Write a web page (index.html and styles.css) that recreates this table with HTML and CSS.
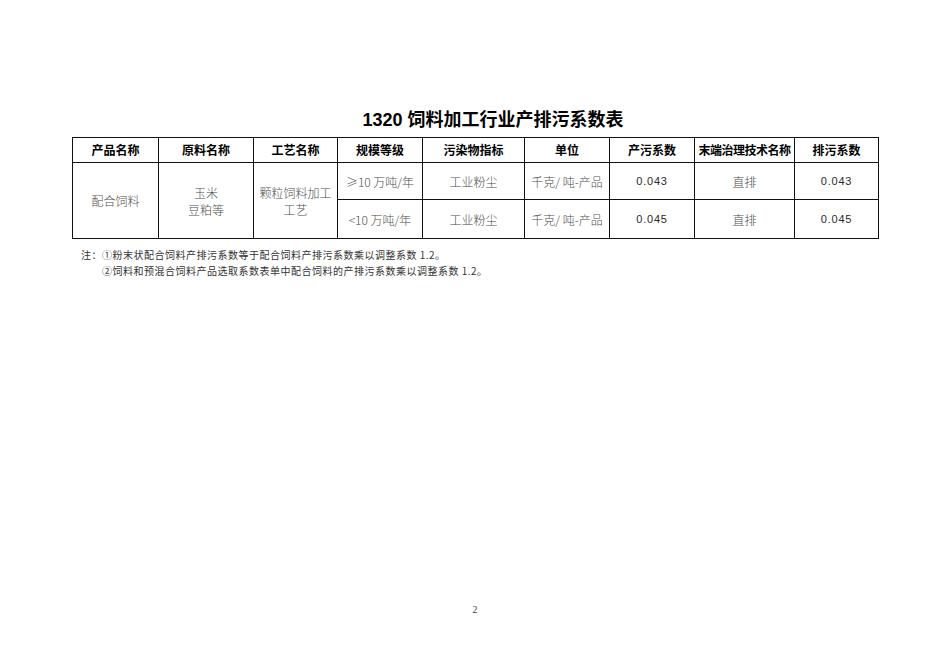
FILE: index.html
```html
<!DOCTYPE html>
<html lang="zh-CN">
<head>
<meta charset="utf-8">
<link rel="stylesheet" href="styles.css">
</head>
<body>
<div class="page">
  <h1 class="title">1320 饲料加工行业产排污系数表</h1>
  <table class="coef">
    <colgroup>
      <col class="c1"><col class="c2"><col class="c3"><col class="c4"><col class="c5"><col class="c6"><col class="c7"><col class="c8"><col class="c9">
    </colgroup>
    <thead>
      <tr class="head">
        <th>产品名称</th><th>原料名称</th><th>工艺名称</th><th>规模等级</th><th>污染物指标</th><th>单位</th><th>产污系数</th><th class="tight">末端治理技术名称</th><th>排污系数</th>
      </tr>
    </thead>
    <tbody>
      <tr class="r1">
        <td rowspan="2">配合饲料</td>
        <td rowspan="2">玉米<br>豆粕等</td>
        <td rowspan="2">颗粒饲料加工<br>工艺</td>
        <td>≥10 万吨/年</td>
        <td>工业粉尘</td>
        <td>千克/ 吨-产品</td>
        <td class="num">0.043</td>
        <td>直排</td>
        <td class="num">0.043</td>
      </tr>
      <tr class="r2">
        <td>&lt;10 万吨/年</td>
        <td>工业粉尘</td>
        <td>千克/ 吨-产品</td>
        <td class="num">0.045</td>
        <td>直排</td>
        <td class="num">0.045</td>
      </tr>
    </tbody>
  </table>
  <div class="notes">
    <p class="n1">注：①粉末状配合饲料产排污系数等于配合饲料产排污系数乘以调整系数 1.2。</p>
    <p class="n2">②饲料和预混合饲料产品选取系数表单中配合饲料的产排污系数乘以调整系数 1.2。</p>
  </div>
  <div class="pageno">2</div>
</div>
</body>
</html>
```
FILE: styles.css
```css
html, body {
  margin: 0;
  padding: 0;
  background: #fff;
}
.page {
  width: 950px;
  height: 672px;
  position: relative;
  font-family: "Noto Sans CJK SC", "Liberation Sans", sans-serif;
  color: #000;
}
.title {
  margin: 0;
  padding-top: 108px;
  padding-left: 36px;
  height: 24px;
  line-height: 24px;
  text-align: center;
  font-family: "Liberation Sans", "Noto Sans CJK SC", sans-serif;
  font-size: 18px;
  font-weight: bold;
}
.coef {
  margin-top: 5px;
  margin-left: 72px;
  width: 806px;
  border-collapse: collapse;
  table-layout: fixed;
}
.c1 { width: 86px; }
.c2 { width: 95px; }
.c3 { width: 84px; }
.c4 { width: 85px; }
.c5 { width: 102px; }
.c6 { width: 85px; }
.c7 { width: 85px; }
.c8 { width: 100px; }
.c9 { width: 84px; }
.coef th, .coef td {
  border: 1px solid #111;
  padding: 0;
  text-align: center;
  vertical-align: middle;
  font-size: 12px;
}
.coef th {
  font-weight: bold;
  height: 24px;
  line-height: 16px;
  color: #000;
}
.coef th.tight {
  letter-spacing: -0.5px;
  white-space: nowrap;
}
.coef td {
  color: #4d4d4d;
  line-height: 17px;
  font-weight: 300;
}
.coef td.num {
  color: #2a2a2a;
  letter-spacing: 0.8px;
  font-family: "Liberation Sans", sans-serif;
  font-size: 11px;
}
.r1 td { height: 36px; }
.r2 td { height: 38px; }
.notes {
  margin-top: 8px;
  font-size: 10px;
  line-height: 16px;
  color: #333;
  letter-spacing: 0.5px;
}
.notes p {
  margin: 0;
}
.n1 { padding-left: 81px; }
.n2 { padding-left: 102px; }
.pageno {
  position: absolute;
  left: 0;
  top: 604px;
  width: 950px;
  text-align: center;
  font-size: 10px;
  color: #444;
  font-family: "Liberation Serif", serif;
}
```
